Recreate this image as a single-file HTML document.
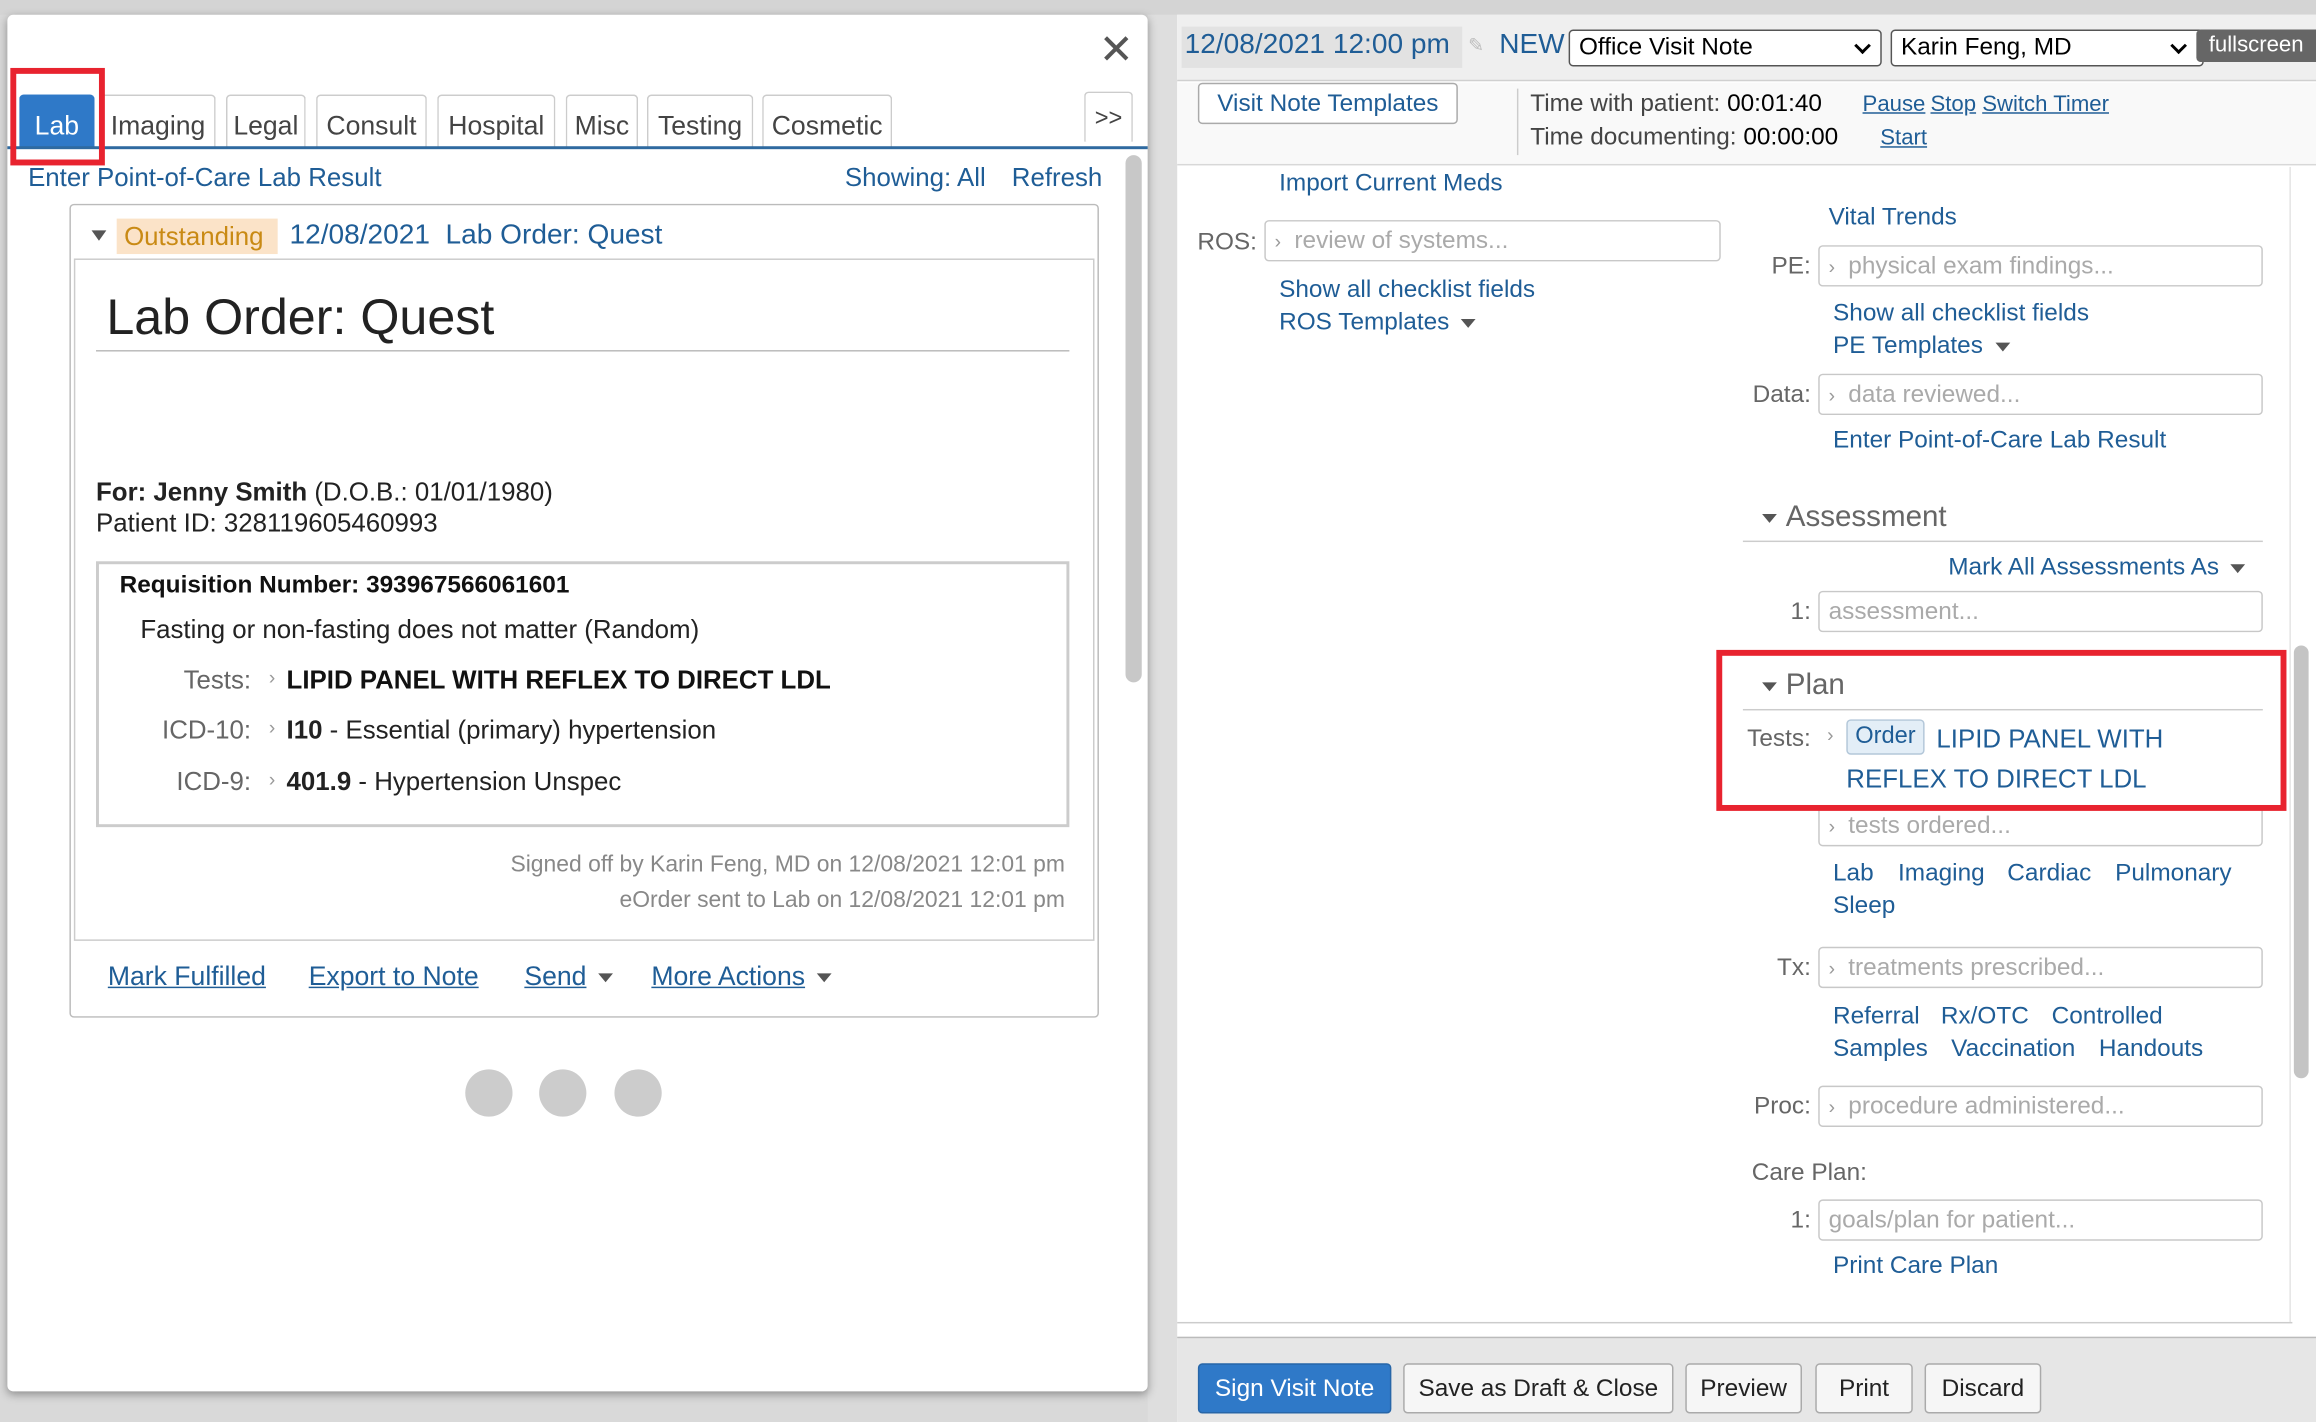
<!DOCTYPE html>
<html><head><meta charset="utf-8"><style>
*{margin:0;padding:0;box-sizing:border-box}
html,body{width:2316px;height:1422px;overflow:hidden;background:#d9d9d9}
#s{position:absolute;left:0;top:0;width:1568px;height:963px;transform:scale(1.47704);transform-origin:0 0;font-family:"Liberation Sans",sans-serif;}
.a{position:absolute;white-space:nowrap}
.t{position:absolute;white-space:nowrap;line-height:20px;height:20px}
.L{color:#1f5d96}
.g{color:#666}
.u{text-decoration:underline}
.tab{position:absolute;top:64px;height:36px;border:1px solid #ccc;border-bottom:none;border-radius:3px 3px 0 0;background:#fff;font-size:18px;color:#444;text-align:center;line-height:40px}
.in{position:absolute;height:28px;border:1px solid #c8c8c8;border-radius:3px;background:#fff;font-size:16.5px;color:#aaa;line-height:26px;padding-left:6px}
.in i{font-style:normal;color:#999;font-size:13px;margin-right:9px}
.lb{position:absolute;text-align:right;font-size:16.5px;color:#666;line-height:20px;width:60px}
.btn{position:absolute;top:923px;height:34px;border:1px solid #aaa;border-radius:3px;background:#f6f6f6;font-size:16.5px;color:#222;text-align:center;line-height:32px}
.car{display:inline-block;width:0;height:0;border-left:5px solid transparent;border-right:5px solid transparent;border-top:6px solid #555;vertical-align:middle;margin-left:8px}
.R{font-size:16.5px}
.chev{position:absolute;right:8px;top:6px;width:8px;height:8px;border-right:2px solid #000;border-bottom:2px solid #000;transform:rotate(45deg)}
</style></head><body><div id="s">
<div class="a" style="left:0;top:0;width:1568px;height:10px;background:#d4d4d4"></div>
<div class="a" style="left:777px;top:10px;width:20px;height:953px;background:#dedede"></div>
<div class="a" style="left:5px;top:10px;width:772px;height:932px;background:#fff;border-radius:4px;box-shadow:0 2px 6px rgba(0,0,0,.35)"></div>
<div class="t" style="left:744px;top:20px;font-size:28px;height:28px;line-height:28px;color:#555">✕</div>
<div class="tab" style="left:13px;width:51px;background:#2f79c8;color:#fff;border-color:#2f79c8">Lab</div>
<div class="tab" style="left:68px;width:78px">Imaging</div>
<div class="tab" style="left:153px;width:54px">Legal</div>
<div class="tab" style="left:214px;width:75px">Consult</div>
<div class="tab" style="left:296px;width:80px">Hospital</div>
<div class="tab" style="left:383px;width:49px">Misc</div>
<div class="tab" style="left:438px;width:72px">Testing</div>
<div class="tab" style="left:516px;width:88px">Cosmetic</div>
<div class="tab" style="left:734px;top:62px;width:33px;height:34px;line-height:36px;font-size:16px">&gt;&gt;</div>
<div class="a" style="left:5px;top:99px;width:772px;height:2px;background:#2f6aa0"></div>
<div class="a" style="left:7px;top:46px;width:64px;height:66px;border:4px solid #e8232f"></div>
<div class="t L" style="left:19px;top:110px;font-size:17.5px">Enter Point-of-Care Lab Result</div>
<div class="t L" style="left:572px;top:110px;font-size:17.5px">Showing: All</div>
<div class="t L" style="left:685px;top:110px;font-size:17.5px">Refresh</div>
<div class="a" style="left:762px;top:105px;width:11px;height:357px;background:#c8c8c8;border-radius:6px"></div>
<div class="a" style="left:47px;top:138px;width:697px;height:551px;border:1px solid #bbb;border-radius:3px"></div>
<div class="a" style="left:62px;top:156px;width:0;height:0;border-left:5px solid transparent;border-right:5px solid transparent;border-top:7px solid #555"></div>
<div class="a" style="left:79px;top:148px;width:109px;height:24px;background:#fbe3c8"></div>
<div class="t" style="left:84px;top:150px;font-size:17.5px;color:#c98a14">Outstanding</div>
<div class="t L" style="left:196px;top:150px;font-size:19px">12/08/2021&nbsp;&nbsp;Lab Order: Quest</div>
<div class="a" style="left:50px;top:175px;width:691px;height:462px;border:1px solid #ccc"></div>
<div class="t" style="left:72px;top:195px;font-size:34px;height:40px;line-height:40px;color:#222">Lab Order: Quest</div>
<div class="a" style="left:65px;top:237px;width:659px;height:1px;background:#bbb"></div>
<div class="t" style="left:65px;top:323px;font-size:17.5px;color:#222"><b>For: Jenny Smith</b> (D.O.B.: 01/01/1980)</div>
<div class="t" style="left:65px;top:344px;font-size:17.5px;color:#222">Patient ID: 328119605460993</div>
<div class="a" style="left:65px;top:380px;width:659px;height:180px;border:2px solid #ccc"></div>
<div class="t" style="left:81px;top:386px;font-size:16.5px;color:#111"><b>Requisition Number: 393967566061601</b></div>
<div class="t" style="left:95px;top:416px;font-size:17.5px;color:#222">Fasting or non-fasting does not matter (Random)</div>
<div class="t g" style="left:100px;width:70px;text-align:right;top:450px;font-size:17.5px">Tests:</div>
<div class="t g" style="left:90px;width:80px;text-align:right;top:484px;font-size:17.5px">ICD-10:</div>
<div class="t g" style="left:90px;width:80px;text-align:right;top:519px;font-size:17.5px">ICD-9:</div>
<div class="t" style="left:182px;top:449px;font-size:13px;color:#999">›</div>
<div class="t" style="left:182px;top:483px;font-size:13px;color:#999">›</div>
<div class="t" style="left:182px;top:518px;font-size:13px;color:#999">›</div>
<div class="t" style="left:194px;top:450px;font-size:17.5px;color:#111"><b>LIPID PANEL WITH REFLEX TO DIRECT LDL</b></div>
<div class="t" style="left:194px;top:484px;font-size:17.5px;color:#222"><b>I10</b> - Essential (primary) hypertension</div>
<div class="t" style="left:194px;top:519px;font-size:17.5px;color:#222"><b>401.9</b> - Hypertension Unspec</div>
<div class="t" style="left:300px;width:421px;text-align:right;top:576px;font-size:15.5px;color:#888">Signed off by Karin Feng, MD on 12/08/2021 12:01 pm</div>
<div class="t" style="left:300px;width:421px;text-align:right;top:600px;font-size:15.5px;color:#888">eOrder sent to Lab on 12/08/2021 12:01 pm</div>
<div class="t L u" style="left:73px;top:651px;font-size:18px">Mark Fulfilled</div>
<div class="t L u" style="left:209px;top:651px;font-size:18px">Export to Note</div>
<div class="t L" style="left:355px;top:651px;font-size:18px"><span class="u">Send</span><span class="car"></span></div>
<div class="t L" style="left:441px;top:651px;font-size:18px"><span class="u">More Actions</span><span class="car"></span></div>
<div class="a" style="left:315px;top:724px;width:32px;height:32px;border-radius:50%;background:#ccc"></div>
<div class="a" style="left:365px;top:724px;width:32px;height:32px;border-radius:50%;background:#ccc"></div>
<div class="a" style="left:416px;top:724px;width:32px;height:32px;border-radius:50%;background:#ccc"></div>
<div class="a" style="left:797px;top:10px;width:771px;height:953px;background:#fff"></div>
<div class="a" style="left:797px;top:10px;width:771px;height:45px;background:#efefef;border-bottom:1px solid #d0d0d0"></div>
<div class="a" style="left:800px;top:18px;width:190px;height:28px;background:#e2e2e2"></div>
<div class="t L" style="left:802px;top:21px;font-size:19px">12/08/2021 12:00 pm</div>
<div class="t" style="left:994px;top:21px;font-size:13px;color:#bbb">✎</div>
<div class="t L" style="left:1015px;top:21px;font-size:19px">NEW</div>
<div class="a" style="left:1062px;top:20px;width:212px;height:25px;border:1px solid #555;border-radius:3px;background:#fff;font-size:16.5px;line-height:23px;padding-left:6px;color:#000">Office Visit Note<span class="chev"></span></div>
<div class="a" style="left:1280px;top:20px;width:212px;height:25px;border:1px solid #555;border-radius:3px;background:#fff;font-size:16.5px;line-height:23px;padding-left:6px;color:#000">Karin Feng, MD<span class="chev" style="right:12px"></span></div>
<div class="a" style="left:1487px;top:20px;width:81px;height:22px;background:#666;border-radius:3px 0 0 3px;color:#fff;font-size:15px;line-height:22px;text-align:center">fullscreen</div>
<div class="a" style="left:797px;top:56px;width:771px;height:56px;background:#f9f9f9;border-bottom:1px solid #d8d8d8"></div>
<div class="a L" style="left:811px;top:56px;width:176px;height:28px;border:1px solid #aaa;border-radius:3px;background:#fff;font-size:16.5px;line-height:26px;text-align:center">Visit Note Templates</div>
<div class="a" style="left:1027px;top:60px;width:1px;height:45px;background:#ccc"></div>
<div class="t R" style="left:1036px;top:60px;color:#444">Time with patient: <span style="color:#000">00:01:40</span></div>
<div class="t L u" style="left:1261px;top:61px;font-size:15px">Pause</div>
<div class="t L u" style="left:1307px;top:61px;font-size:15px">Stop</div>
<div class="t L u" style="left:1342px;top:61px;font-size:15px">Switch Timer</div>
<div class="t R" style="left:1036px;top:83px;color:#444">Time documenting: <span style="color:#000">00:00:00</span></div>
<div class="t L u" style="left:1273px;top:84px;font-size:15px">Start</div>
<div class="a" style="left:1550px;top:113px;width:1px;height:782px;background:#e4e4e4"></div>
<div class="a" style="left:1553px;top:437px;width:10px;height:293px;background:#c4c4c4;border-radius:5px"></div>
<div class="t L R" style="left:866px;top:114px">Import Current Meds</div>
<div class="lb" style="left:791px;top:154px">ROS:</div>
<div class="in" style="left:856px;top:149px;width:309px"><i>›</i>review of systems...</div>
<div class="t L R" style="left:866px;top:186px">Show all checklist fields</div>
<div class="t L R" style="left:866px;top:208px">ROS Templates<span class="car"></span></div>
<div class="t L R" style="left:1238px;top:137px">Vital Trends</div>
<div class="lb" style="left:1166px;top:170px">PE:</div>
<div class="in" style="left:1231px;top:166px;width:301px"><i>›</i>physical exam findings...</div>
<div class="t L R" style="left:1241px;top:202px">Show all checklist fields</div>
<div class="t L R" style="left:1241px;top:224px">PE Templates<span class="car"></span></div>
<div class="lb" style="left:1166px;top:257px">Data:</div>
<div class="in" style="left:1231px;top:253px;width:301px"><i>›</i>data reviewed...</div>
<div class="t L R" style="left:1241px;top:288px">Enter Point-of-Care Lab Result</div>
<div class="a" style="left:1193px;top:348px;width:0;height:0;border-left:5px solid transparent;border-right:5px solid transparent;border-top:6px solid #555"></div>
<div class="t g" style="left:1209px;top:340px;font-size:20px">Assessment</div>
<div class="a" style="left:1180px;top:366px;width:352px;height:1px;background:#ccc"></div>
<div class="t L R" style="left:1319px;top:374px">Mark All Assessments As<span class="car"></span></div>
<div class="lb" style="left:1166px;top:404px">1:</div>
<div class="in" style="left:1231px;top:400px;width:301px">assessment...</div>
<div class="a" style="left:1193px;top:462px;width:0;height:0;border-left:5px solid transparent;border-right:5px solid transparent;border-top:6px solid #555"></div>
<div class="t g" style="left:1209px;top:454px;font-size:20px">Plan</div>
<div class="a" style="left:1180px;top:480px;width:352px;height:1px;background:#ccc"></div>
<div class="lb" style="left:1166px;top:490px">Tests:</div>
<div class="t" style="left:1237px;top:488px;font-size:13px;color:#999">›</div>
<div class="a" style="left:1250px;top:487px;width:53px;height:24px;background:#e3eef7;border:1px solid #b3c7d9;border-radius:3px;font-size:16px;line-height:22px;text-align:center;color:#1f5d96">Order</div>
<div class="t L" style="left:1311px;top:490px;font-size:17.5px">LIPID PANEL WITH</div>
<div class="t L" style="left:1250px;top:517px;font-size:17.5px">REFLEX TO DIRECT LDL</div>
<div class="in" style="left:1231px;top:545px;width:301px"><i>›</i>tests ordered...</div>
<div class="a" style="left:1162px;top:440px;width:386px;height:109px;border:4px solid #e8232f"></div>
<div class="t L R" style="left:1241px;top:581px">Lab</div>
<div class="t L R" style="left:1285px;top:581px">Imaging</div>
<div class="t L R" style="left:1359px;top:581px">Cardiac</div>
<div class="t L R" style="left:1432px;top:581px">Pulmonary</div>
<div class="t L R" style="left:1241px;top:603px">Sleep</div>
<div class="lb" style="left:1166px;top:645px">Tx:</div>
<div class="in" style="left:1231px;top:641px;width:301px"><i>›</i>treatments prescribed...</div>
<div class="t L R" style="left:1241px;top:678px">Referral</div>
<div class="t L R" style="left:1314px;top:678px">Rx/OTC</div>
<div class="t L R" style="left:1389px;top:678px">Controlled</div>
<div class="t L R" style="left:1241px;top:700px">Samples</div>
<div class="t L R" style="left:1321px;top:700px">Vaccination</div>
<div class="t L R" style="left:1421px;top:700px">Handouts</div>
<div class="lb" style="left:1166px;top:739px">Proc:</div>
<div class="in" style="left:1231px;top:735px;width:301px"><i>›</i>procedure administered...</div>
<div class="t g R" style="left:1186px;top:784px">Care Plan:</div>
<div class="lb" style="left:1166px;top:816px">1:</div>
<div class="in" style="left:1231px;top:812px;width:301px">goals/plan for patient...</div>
<div class="t L R" style="left:1241px;top:847px">Print Care Plan</div>
<div class="a" style="left:797px;top:895px;width:755px;height:1px;background:#ccc"></div>
<div class="a" style="left:797px;top:905px;width:771px;height:58px;background:#e6e6e6;border-top:1px solid #bbb"></div>
<div class="btn" style="left:811px;width:131px;background:#2f79c8;border-color:#2766a8;color:#fff">Sign Visit Note</div>
<div class="btn" style="left:950px;width:183px">Save as Draft &amp; Close</div>
<div class="btn" style="left:1141px;width:79px">Preview</div>
<div class="btn" style="left:1229px;width:66px">Print</div>
<div class="btn" style="left:1303px;width:79px">Discard</div>
</div></body></html>
